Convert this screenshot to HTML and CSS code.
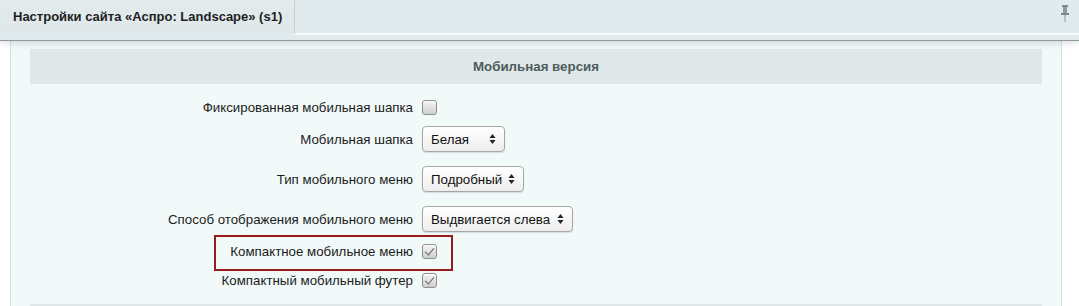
FILE: index.html
```html
<!DOCTYPE html>
<html lang="ru">
<head>
    <meta charset="UTF-8">
    <title>Настройки сайта «Аспро: Landscape» (s1)</title>
    <link rel="stylesheet" href="styles.css">
</head>
<body>
    <div class="top-bar">
        <div class="tab">Настройки сайта «Аспро: Landscape» (s1)</div>
        <div class="top-rest">
            <svg class="pin" width="10" height="18" viewBox="0 0 10 18">
                <rect x="2" y="0" width="6" height="2" fill="#7d8a8c"/>
                <rect x="3" y="2" width="4" height="6" fill="#8c989a"/>
                <path d="M1 8 H9 V10 H1 Z" fill="#7d8a8c"/>
                <rect x="4.5" y="10" width="1" height="7" fill="#8c989a"/>
            </svg>
        </div>
    </div>

    <div class="panel">
        <div class="section-title">Мобильная версия</div>

        <div class="fields">
            <div class="row row-check">
                <label class="label">Фиксированная мобильная шапка</label>
                <div class="control"><span class="checkbox"></span></div>
            </div>
            <div class="row row-select">
                <label class="label">Мобильная шапка</label>
                <div class="control">
                    <div class="select select-head">
                        <span>Белая</span>
                        <svg width="7" height="12" viewBox="0 0 7 12"><path d="M3.5 1 L6.5 5 H0.5 Z M3.5 11 L6.5 7 H0.5 Z" fill="#222"/></svg>
                    </div>
                </div>
            </div>
            <div class="row row-select">
                <label class="label">Тип мобильного меню</label>
                <div class="control">
                    <div class="select select-type">
                        <span>Подробный</span>
                        <svg width="7" height="12" viewBox="0 0 7 12"><path d="M3.5 1 L6.5 5 H0.5 Z M3.5 11 L6.5 7 H0.5 Z" fill="#222"/></svg>
                    </div>
                </div>
            </div>
            <div class="row row-select">
                <label class="label">Способ отображения мобильного меню</label>
                <div class="control">
                    <div class="select select-view">
                        <span>Выдвигается слева</span>
                        <svg width="7" height="12" viewBox="0 0 7 12"><path d="M3.5 1 L6.5 5 H0.5 Z M3.5 11 L6.5 7 H0.5 Z" fill="#222"/></svg>
                    </div>
                </div>
            </div>
            <div class="row row-check marked">
                <label class="label">Компактное мобильное меню</label>
                <div class="control"><span class="checkbox checked"></span></div>
            </div>
            <div class="row row-check row-last">
                <label class="label">Компактный мобильный футер</label>
                <div class="control"><span class="checkbox checked"></span></div>
            </div>
        </div>

        <div class="section-title"></div>
    </div>
</body>
</html>
```

FILE: styles.css
```css
* {
    margin: 0;
    padding: 0;
    box-sizing: border-box;
}

body {
    font-family: 'Liberation Sans', Arial, sans-serif;
    font-size: 13px;
    color: #1c1c1c;
    background: #fff;
    overflow: hidden;
}

.top-bar {
    display: flex;
    height: 41px;
    background: #e1eaec;
    border-bottom: 1px solid #8e999b;
    box-shadow: 0 2px 7px rgba(60, 80, 85, 0.18);
    position: relative;
    z-index: 2;
}

.tab {
    width: 295px;
    height: 33px;
    padding-left: 13px;
    line-height: 33px;
    font-weight: bold;
    color: #1e1e1e;
    background: linear-gradient(#e3ebed, #dee7e9);
    border-right: 1px solid #c6d0d2;
}

.top-rest {
    flex: 1;
    height: 35px;
    border-bottom: 2px solid #f6fafa;
    display: flex;
    justify-content: flex-end;
    align-items: flex-start;
    padding: 5px 9px 0 0;
}

.panel {
    margin: 0 17px 0 10px;
    padding: 8px 19px 0 19px;
    background: #f1f9f9;
    border-left: 1px solid #d3dfe0;
    border-right: 1px solid #d3dfe0;
}

.section-title {
    height: 35px;
    line-height: 35px;
    text-align: center;
    font-weight: bold;
    font-size: 13.3px;
    color: #4d5c5e;
    background: #e0e7e8;
}

.fields {
    padding: 11px 0 12px;
    font-size: 13.3px;
}

.row {
    display: grid;
    grid-template-columns: 383px 1fr;
    column-gap: 9px;
    align-items: center;
    position: relative;
}

.row-check {
    height: 24px;
}

.row-select {
    height: 40px;
}

.row-last {
    margin-top: 5px;
}

.label {
    text-align: right;
}

.control {
    display: flex;
    align-items: center;
}

.checkbox {
    width: 15px;
    height: 15px;
    border: 1px solid #8f8f8f;
    border-radius: 3px;
    background: linear-gradient(#f5f5f5, #cfcfcf);
    box-shadow: inset 0 1px 0 #fff;
    position: relative;
}

.checkbox.checked::after {
    content: '';
    position: absolute;
    left: 4px;
    top: 1px;
    width: 4px;
    height: 8px;
    border: solid #666;
    border-width: 0 1.5px 1.5px 0;
    transform: rotate(40deg);
}

.select {
    height: 26px;
    padding: 0 8px 0 8px;
    display: flex;
    align-items: center;
    justify-content: space-between;
    border: 1px solid #a6a6a6;
    border-radius: 4px;
    background: linear-gradient(#ffffff, #ededed);
    box-shadow: 0 1px 1px rgba(0, 0, 0, 0.12);
    color: #111;
}

.select-head { width: 83px; }
.select-type { width: 102px; }
.select-view { width: 151px; }

.marked::after {
    content: '';
    position: absolute;
    left: 184px;
    top: -4px;
    width: 235px;
    height: 32px;
    border: 2px solid #9a1b1b;
    pointer-events: none;
}
```
